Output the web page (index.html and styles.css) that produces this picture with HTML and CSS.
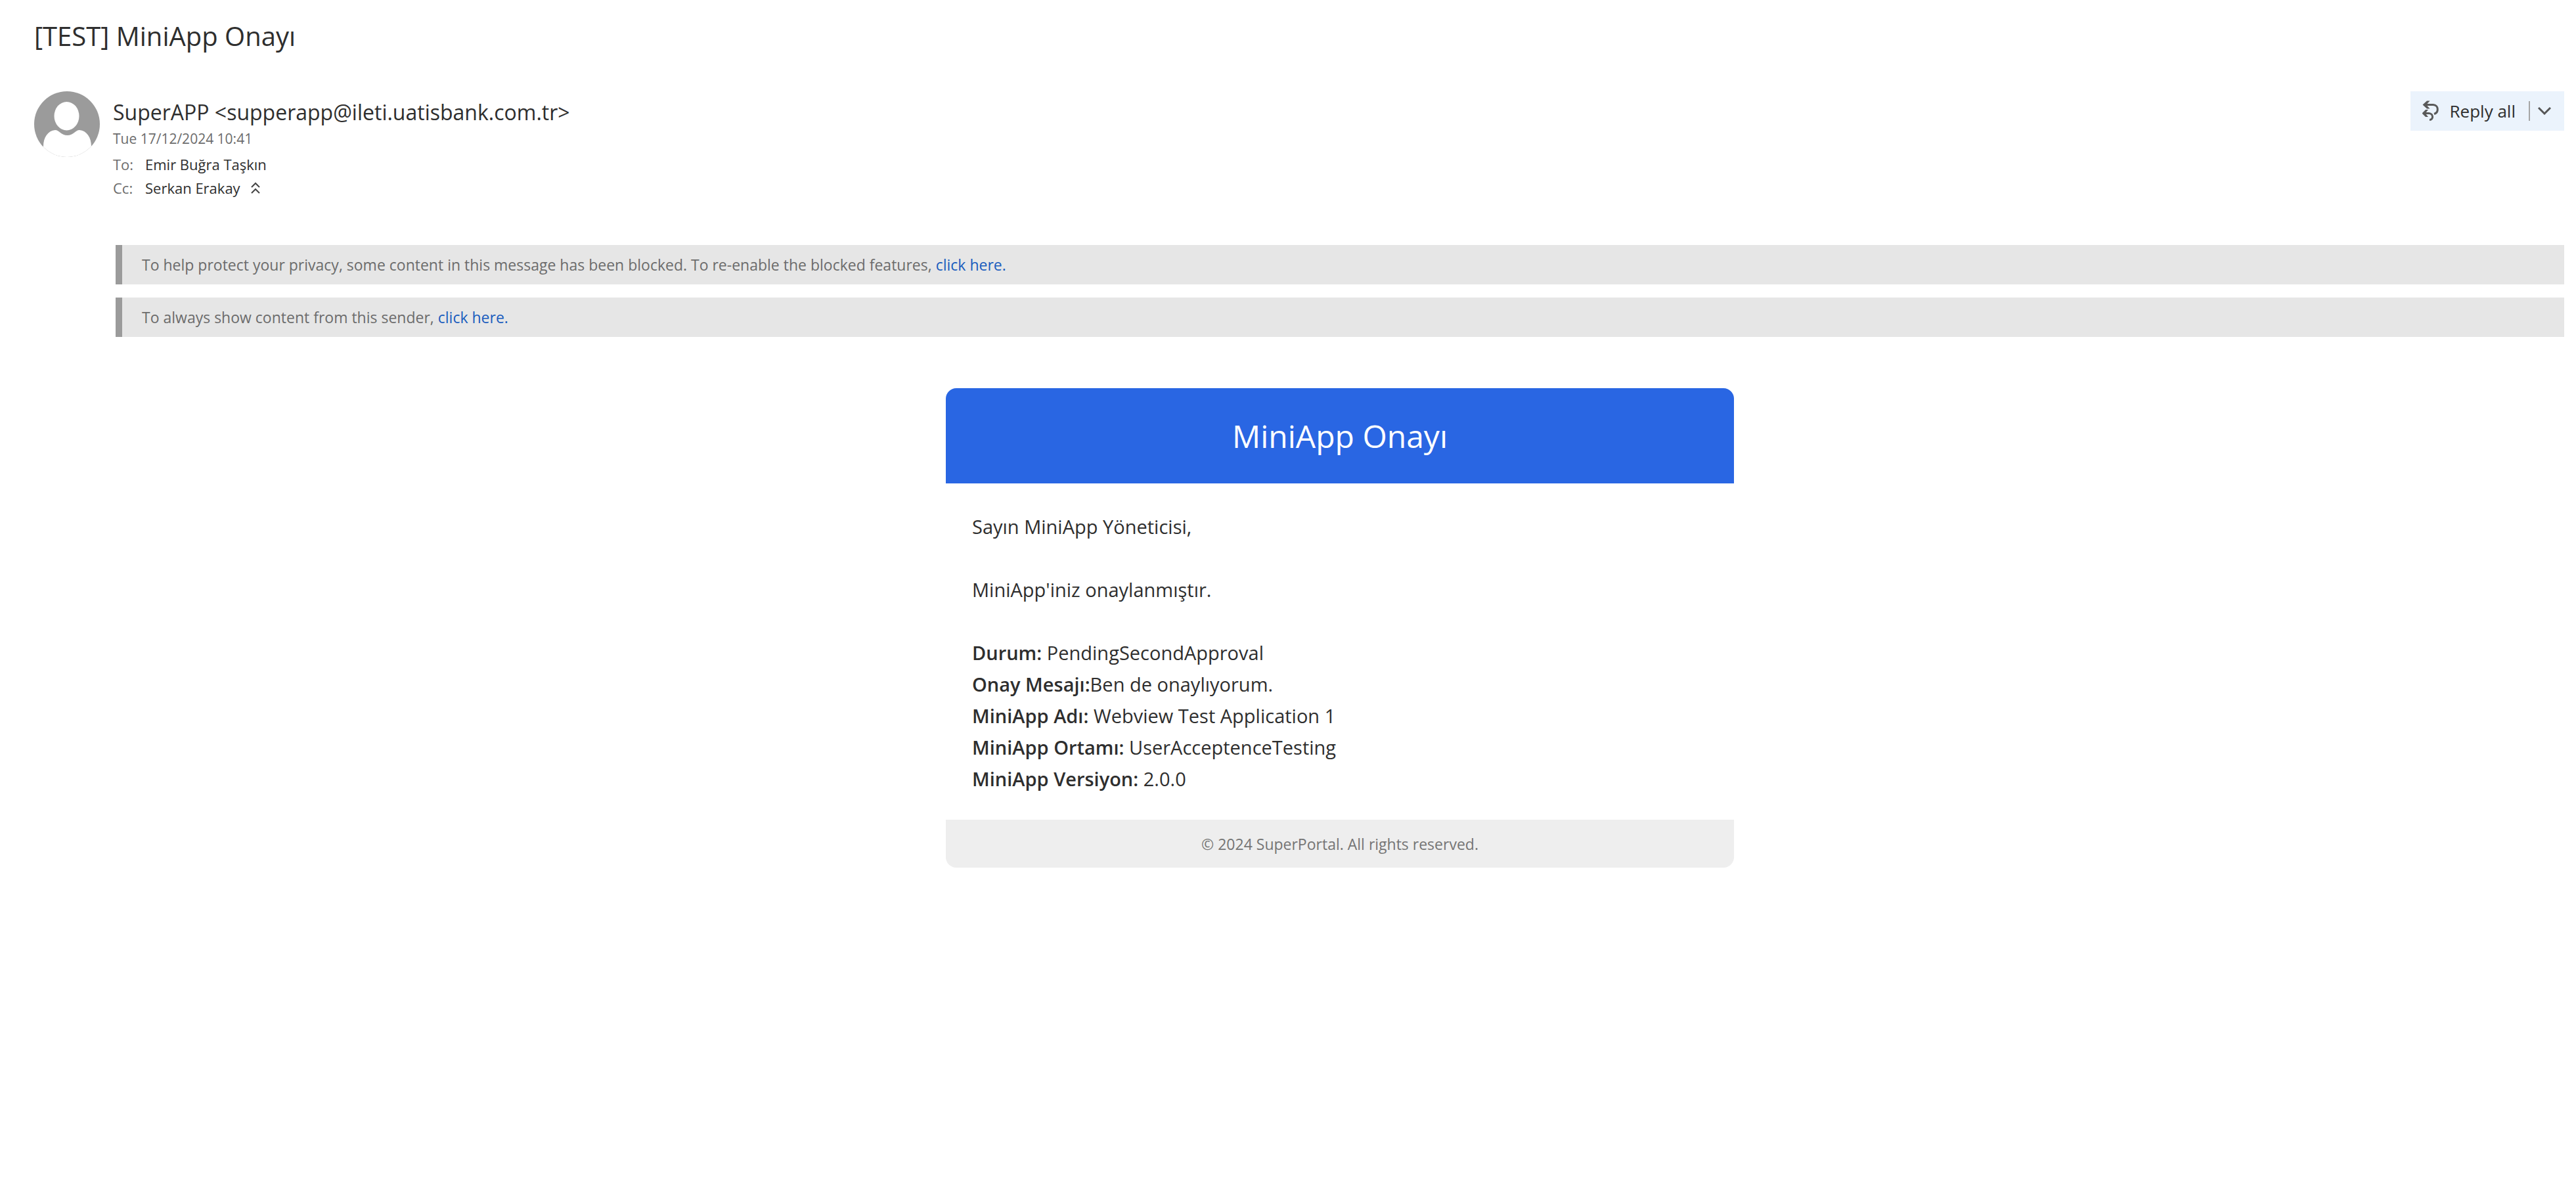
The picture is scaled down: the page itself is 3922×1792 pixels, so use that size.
FILE: index.html
```html
<!DOCTYPE html>
<html lang="en">
<head>
<meta charset="utf-8">
<meta name="viewport" content="width=device-width, initial-scale=1">
<title>[TEST] MiniApp Onayı</title>
<link rel="stylesheet" href="styles.css">
</head>
<body>
<main class="message">
  <h1 class="subject">[TEST] MiniApp Onayı</h1>

  <header class="envelope">
    <svg class="avatar" viewBox="0 0 100 100" aria-hidden="true">
      <defs><clipPath id="disc"><circle cx="50" cy="50" r="50"/></clipPath></defs>
      <circle cx="50" cy="50" r="50" fill="#9b9b9b"/>
      <g clip-path="url(#disc)" fill="#fff">
        <path d="M14 84C14 70 21 60 32 59C38 59 41 67 50.500 67C60 67 63 59 69 59C80 60 87 70 87 84L93 100H7Z"/>
        <ellipse cx="49.500" cy="37.700" rx="19" ry="21.700"/>
      </g>
    </svg>

    <div class="details">
      <p class="sender">SuperAPP &lt;supperapp@ileti.uatisbank.com.tr&gt;</p>
      <p class="date">Tue 17/12/2024 10:41</p>
      <dl class="people">
        <div class="person"><dt>To:</dt><dd>Emir Buğra Taşkın</dd></div>
        <div class="person"><dt>Cc:</dt><dd>Serkan Erakay
          <button class="collapse" type="button" aria-label="Collapse details">
            <svg viewBox="0 0 14 18" width="14" height="18" fill="none" stroke="#444" stroke-width="2"><path d="M1 8L7 2L13 8M1 17L7 11L13 17"/></svg>
          </button></dd></div>
      </dl>
    </div>

    <div class="actions">
      <button class="reply" type="button">
        <svg viewBox="0 0 26 32" width="26" height="32" fill="none" stroke="#5a5a5a" stroke-width="3" aria-hidden="true">
          <path d="M3 6.500H16.500C25 7 25.500 18 18 20.500"/>
          <path d="M1.500 19.500H10C17.500 20 17 29.500 11 29.500"/>
          <path d="M7 .5H11.500L6 6.500L11.500 12.500H7L.5 6.500ZM5 14H9L4.500 19.500L9 25H5L-.5 19.500Z" fill="#5a5a5a" stroke="none"/>
        </svg>
        Reply all
      </button>
      <button class="more" type="button" aria-label="More reply options">
        <svg viewBox="0 0 20 16" width="20" height="16" fill="none" stroke="#555" stroke-width="3" aria-hidden="true"><path d="M1 3L10 12L19 3"/></svg>
      </button>
    </div>
  </header>

  <div class="content">
    <p class="notice">To help protect your privacy, some content in this message has been blocked. To re-enable the blocked features, <a href="#">click here.</a></p>
    <p class="notice">To always show content from this sender, <a href="#">click here.</a></p>

    <article class="card">
      <h2 class="card-title">MiniApp Onayı</h2>
      <div class="card-body">
        <p>Sayın MiniApp Yöneticisi,</p>
        <p>MiniApp'iniz onaylanmıştır.</p>
        <p>
          <strong>Durum:</strong> PendingSecondApproval<br>
          <strong>Onay Mesajı:</strong>Ben de onaylıyorum.<br>
          <strong>MiniApp Adı:</strong> Webview Test Application 1<br>
          <strong>MiniApp Ortamı:</strong> UserAcceptenceTesting<br>
          <strong>MiniApp Versiyon:</strong> 2.0.0
        </p>
      </div>
      <footer class="card-footer">© 2024 SuperPortal. All rights reserved.</footer>
    </article>
  </div>
</main>
</body>
</html>
```
FILE: styles.css
```css
* {
  box-sizing: border-box;
}

body {
  margin: 0;
  background: #fff;
  color: #2e2e2e;
  font-family: "Segoe UI", "Open Sans", "Noto Sans", sans-serif;
}

h1, h2, p, dl, dd {
  margin: 0;
}

button {
  border: 0;
  padding: 0;
  background: none;
  color: inherit;
  font: inherit;
  cursor: pointer;
}

a {
  color: #1a5dbe;
  text-decoration: none;
}

.message {
  padding: 27px 18px 40px 52px;
}

.subject {
  font-size: 40px;
  font-weight: 400;
  line-height: 56px;
}

.envelope {
  display: flex;
  align-items: flex-start;
  gap: 20px;
  margin-top: 56px;
}

.avatar {
  flex: none;
  width: 100px;
  height: 100px;
}

.details {
  flex: 1;
  padding-top: 9px;
}

.sender {
  font-size: 32px;
  line-height: 46px;
}

.date {
  color: #6c6c6c;
  font-size: 21px;
  line-height: 34px;
}

.people {
  margin-top: 4px;
  font-size: 22px;
  line-height: 36px;
}

.person {
  display: flex;
}

.person dt {
  width: 49px;
  color: #6c6c6c;
}

.person dd {
  display: flex;
  align-items: center;
  gap: 16px;
}

.collapse,
.collapse svg,
.reply svg,
.more svg {
  display: block;
}

.actions {
  display: flex;
  align-items: center;
  height: 60px;
  padding: 0 20px 0 18px;
  background: #ebf3fc;
}

.reply {
  display: flex;
  align-items: center;
  gap: 16px;
  padding-right: 20px;
  font-size: 26px;
  line-height: 62px;
}

.more {
  padding: 7px 0 7px 12px;
  border-left: 2px solid #a6a6a6;
}

.content {
  margin: 69px 0 0 124px;
}

.notice {
  margin-bottom: 20px;
  padding: 1px 30px 0;
  border-left: 10px solid #9b9b9b;
  background: #e6e6e6;
  color: #6c6c6c;
  font-size: 23px;
  line-height: 59px;
}

.card {
  max-width: 1200px;
  margin: 78px auto 0;
  overflow: hidden;
  border-radius: 16px;
}

.card-title {
  padding: 40px;
  background: #2966e3;
  color: #fff;
  font-size: 48px;
  font-weight: 500;
  line-height: 65px;
  text-align: center;
}

.card-body {
  display: grid;
  gap: 48px;
  padding: 42px 40px 38px;
  font-size: 29px;
  line-height: 48px;
}

.card-body strong {
  font-weight: 600;
}

.card-footer {
  padding: 21px 20px 19px;
  background: #eee;
  color: #757575;
  font-size: 23px;
  line-height: 33px;
  text-align: center;
}
```
